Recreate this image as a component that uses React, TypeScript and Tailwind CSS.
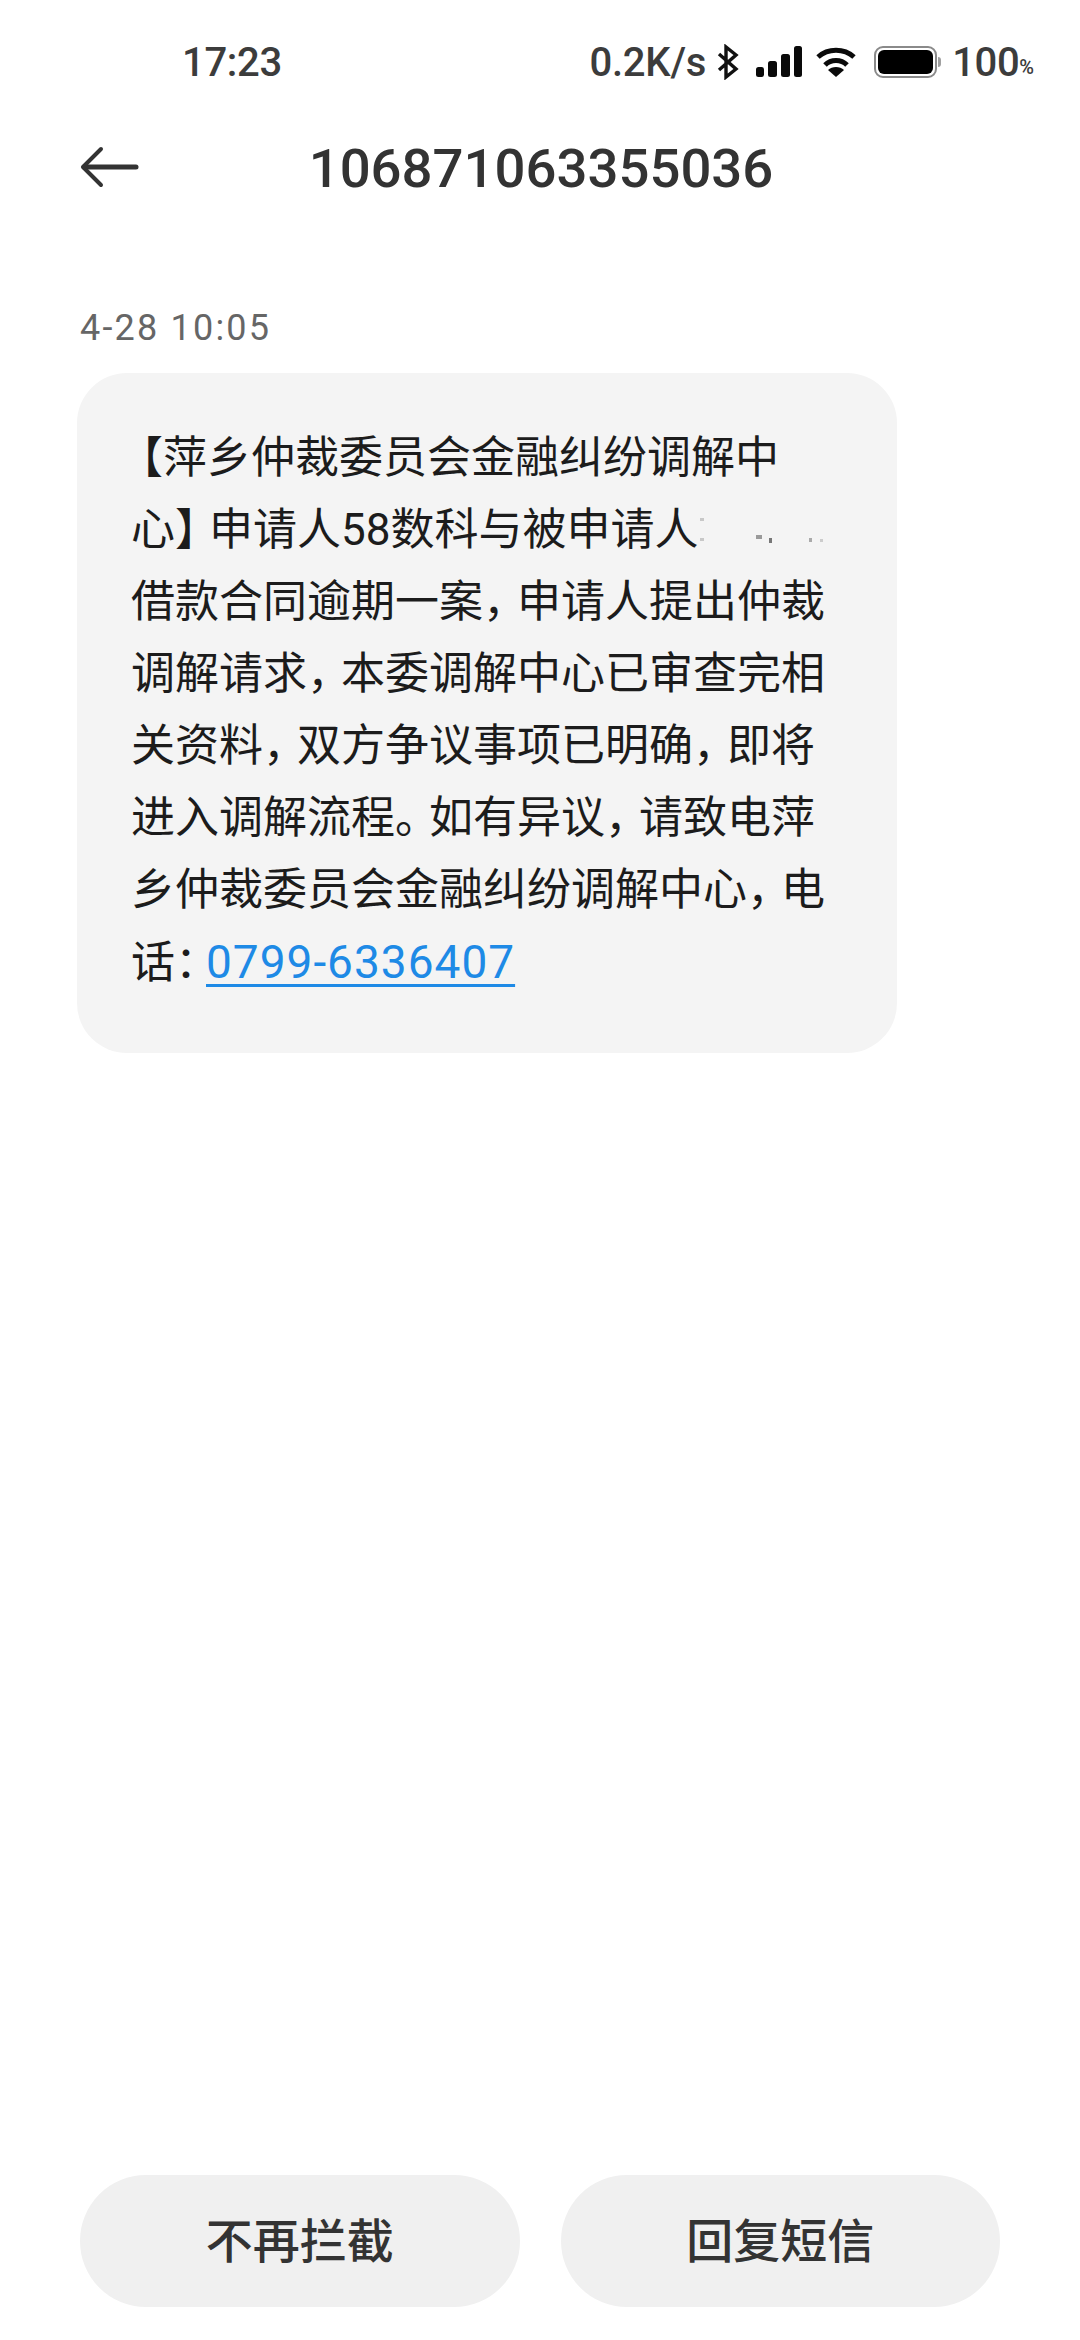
const font = { fontFamily: '"Roboto", "Noto Sans CJK SC", sans-serif' };

function StatusIcons() {
  return (
    <div className="flex items-center">
      <span className="text-[40px] leading-[48px] font-medium text-[#3c3c3c] tracking-[-0.2px]">0.2K/s</span>
      <svg className="ml-[10px] mb-[3px]" width="24" height="36" viewBox="0 0 24 36" fill="none">
        <path d="M3 10 L20 25 L10 33 L10 3 L20 11 L3 26" stroke="#111" strokeWidth="3.4" strokeLinejoin="miter" />
      </svg>
      <svg className="ml-[16px] mb-[3px]" width="46" height="32" viewBox="0 0 46 32" fill="#0a0a0a">
        <rect x="0" y="21" width="8" height="10" rx="2.5" />
        <rect x="12" y="15" width="9" height="16" rx="2.5" />
        <rect x="25" y="8" width="9" height="23" rx="2.5" />
        <rect x="38" y="0" width="8" height="31" rx="2.5" />
      </svg>
      <svg className="ml-[14px] mb-[3px]" width="40" height="32" viewBox="0 0 40 32" fill="none" stroke="#0a0a0a" strokeWidth="5">
        <path d="M2 11 C12 2 28 2 38 11" />
        <path d="M9 19 C15 13 25 13 31 19" />
        <path d="M12 24 L20 31 L28 24 C24 20 16 20 12 24 Z" fill="#0a0a0a" stroke="none" />
      </svg>
      <div className="ml-[18px] mb-[3px] flex items-center">
        <div className="w-[63px] h-[32px] rounded-[9px] border-2 border-[#8a8a8a] p-[2px]">
          <div className="w-full h-full rounded-[6px] bg-black" />
        </div>
        <div className="w-[3px] h-[10px] rounded-r-[3px] bg-[#a0a0a0] ml-[1px]" />
      </div>
      <span className="ml-[11px] text-[40px] leading-[48px] font-medium text-[#3c3c3c] tracking-[-0.4px]">100</span>
      <span className="text-[20px] leading-[48px] font-medium text-[#3c3c3c] mt-[8px]">%</span>
    </div>
  );
}

function Txt({ s }: { s: string }) {
  const parts = s.split(/([【】，。：])/);
  return (
    <>
      {parts.map((p, i) =>
        p === '【' ? (
          <span key={i} className="ml-[10px] [font-feature-settings:'halt']">{p}</span>
        ) : p === '：' ? (
          <span key={i} className="mr-[9px] [font-feature-settings:'halt']">{p}</span>
        ) : p === '】' || p === '，' || p === '。' ? (
          <span key={i} className="mr-[12px] [font-feature-settings:'halt']">{p}</span>
        ) : (
          <span key={i}>{p}</span>
        )
      )}
    </>
  );
}

const lines = [
  '【萍乡仲裁委员会金融纠纷调解中',
  null,
  '借款合同逾期一案，申请人提出仲裁',
  '调解请求，本委调解中心已审查完相',
  '关资料，双方争议事项已明确，即将',
  '进入调解流程。如有异议，请致电萍',
  '乡仲裁委员会金融纠纷调解中心，电',
];

export default function App() {
  return (
    <div className="w-[1080px] h-[2340px] bg-white flex flex-col" style={font}>
      <div className="h-[64px] mt-[31px] pl-[182px] pr-[46px] flex items-center justify-between">
        <span className="text-[40px] leading-[48px] font-medium text-[#3c3c3c] tracking-[-0.3px]">17:23</span>
        <StatusIcons />
      </div>

      <div className="relative h-[100px] mt-[23px] flex items-center justify-center">
        <svg className="absolute left-[80px] top-[28px]" width="60" height="42" viewBox="0 0 60 42" fill="none" stroke="#333" strokeWidth="5" strokeLinecap="round" strokeLinejoin="round">
          <path d="M56 21 H4" />
          <path d="M21 3 L3 21 L21 39" strokeWidth="4" />
        </svg>
        <span className="text-[54.5px] leading-[64px] font-medium text-[#333] pl-[2px]">106871063355036</span>
      </div>

      <div className="ml-[80px] mt-[88px] text-[36px] leading-[44px] text-[#666] tracking-[2.2px]">4-28 10:05</div>

      <div className="ml-[77px] mt-[23px] w-[820px] h-[680px] rounded-[50px] bg-[#f4f4f4] pl-[54px] pt-[49px] text-[#1c1c1c]">
        <div className="text-[44px] leading-[72px] whitespace-nowrap">
          {lines.map((l, i) =>
            l === null ? (
              <div key={i} className="flex items-center">
                <span><Txt s="心】申请人58数科与被申请人" /></span>
                <div className="relative w-[130px] h-[72px]">
                  <span className="absolute left-[2px] top-[24px] w-[4px] h-[3px] bg-[#c8c8c8]" />
                  <span className="absolute left-[2px] top-[44px] w-[4px] h-[3px] bg-[#c8c8c8]" />
                  <span className="absolute left-[58px] top-[41px] w-[6px] h-[4px] bg-[#9a9a9a]" />
                  <span className="absolute left-[71px] top-[44px] w-[3px] h-[5px] bg-[#777]" />
                  <span className="absolute left-[111px] top-[44px] w-[3px] h-[4px] bg-[#aaa]" />
                  <span className="absolute left-[122px] top-[45px] w-[3px] h-[3px] bg-[#ccc]" />
                </div>
              </div>
            ) : (
              <div key={i}><Txt s={l} /></div>
            )
          )}
          <div>
            <Txt s="话：" /><span className="text-[#1e8ae6] underline decoration-[3px] underline-offset-[6px] text-[46px] tracking-[1px]">0799-6336407</span>
          </div>
        </div>
      </div>

      <div className="mt-auto mb-[33px] pl-[80px] pr-[80px] flex gap-[41px]">
        <button className="flex-1 h-[132px] pt-[3px] rounded-full bg-[#f0f0f0] text-[47px] font-medium text-[#333]">不再拦截</button>
        <button className="flex-1 h-[132px] pt-[3px] rounded-full bg-[#f0f0f0] text-[47px] font-medium text-[#333]">回复短信</button>
      </div>
    </div>
  );
}
